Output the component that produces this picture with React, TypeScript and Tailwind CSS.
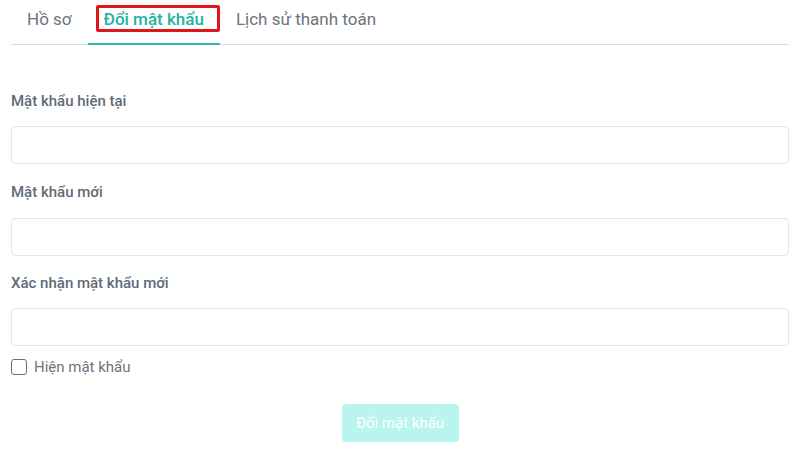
import React, { useState } from "react";

const tabs = ["Hồ sơ", "Đổi mật khẩu", "Lịch sử thanh toán"];

function Field({ label, type, gap }: { label: string; type: string; gap: string }) {
  return (
    <div>
      <label className="block text-[15px] font-medium leading-[22px] text-[#5f6b77]">{label}</label>
      <input
        type={type}
        className={`${gap} block h-[38px] w-full rounded-[4px] border border-[#e3e7ea] bg-white px-3 text-sm outline-none`}
      />
    </div>
  );
}

export default function App() {
  const [active, setActive] = useState(1);
  const [show, setShow] = useState(false);
  const type = show ? "text" : "password";

  return (
    <main className="min-h-screen bg-white px-[11px] font-['Roboto','Noto_Sans',sans-serif]">
      <nav className="flex border-b border-[#dcdfe2]">
        {tabs.map((tab, i) => (
          <button
            key={tab}
            onClick={() => setActive(i)}
            className={
              i === active
                ? "relative -mb-px border-b-2 border-[#2cb9ab] px-4 pb-[12px] pt-[7px] text-[17px] font-medium leading-6 text-[#22b3a3]"
                : "relative -mb-px border-b-2 border-transparent px-4 pb-[12px] pt-[7px] text-[17px] leading-6 text-[#6b747d]"
            }
          >
            {tab}
            {i === 1 && (
              <span className="pointer-events-none absolute left-[8px] top-[5px] h-[27px] w-[124px] rounded-[2px] border-[3px] border-[#e0161d]" />
            )}
          </button>
        ))}
      </nav>

      <form className="pt-[45px]" onSubmit={(e) => e.preventDefault()}>
        <Field label="Mật khẩu hiện tại" type={type} gap="mt-[14px]" />
        <div className="mt-[17px]">
          <Field label="Mật khẩu mới" type={type} gap="mt-[15px]" />
        </div>
        <div className="mt-[16px]">
          <Field label="Xác nhận mật khẩu mới" type={type} gap="mt-[14px]" />
        </div>

        <label className="mt-[10px] flex items-center gap-[7px] text-[15px] leading-[22px] text-[#6b747d]">
          <input
            type="checkbox"
            checked={show}
            onChange={(e) => setShow(e.target.checked)}
            className="h-4 w-4 appearance-none rounded-[3px] border-[1.5px] border-[#6b6f73] bg-white"
          />
          Hiện mật khẩu
        </label>

        <div className="mt-[26px] flex justify-center">
          <button
            disabled
            className="h-[38px] w-[117px] rounded-[4px] bg-[#b9f4ee] text-[15px] text-white"
          >
            Đổi mật khẩu
          </button>
        </div>
      </form>
    </main>
  );
}
